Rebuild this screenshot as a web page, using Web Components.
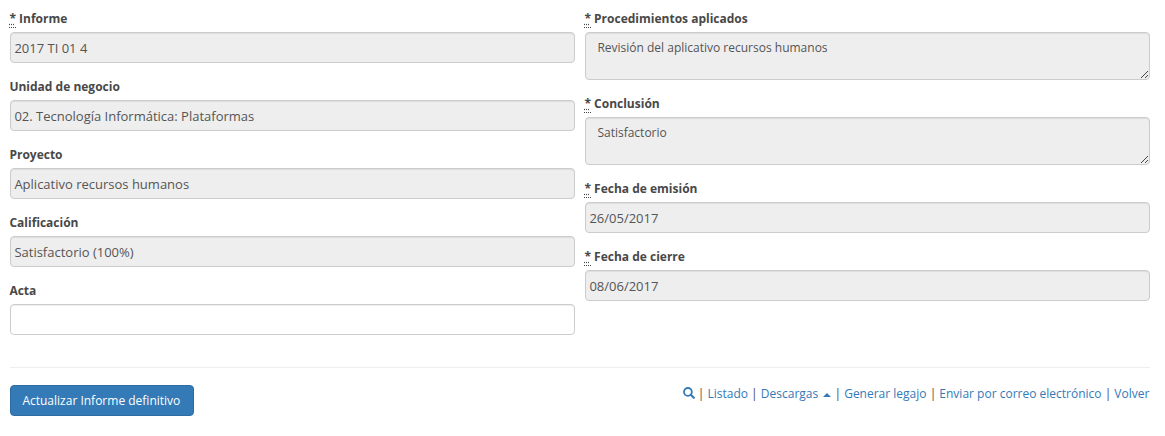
<!DOCTYPE html>
<html lang="es">
<head>
<meta charset="utf-8">
<title>Informe definitivo</title>
<style>
body{margin:0;background:#fff;color:#484848;font:12px/17px "Open Sans","Noto Sans",sans-serif}
</style>
</head>
<body>
<report-form>
  <form-field slot="left" label="Informe" required>2017 TI 01 4</form-field>
  <form-field slot="left" label="Unidad de negocio">02. Tecnología Informática: Plataformas</form-field>
  <form-field slot="left" label="Proyecto">Aplicativo recursos humanos</form-field>
  <form-field slot="left" label="Calificación">Satisfactorio (100%)</form-field>
  <form-field slot="left" label="Acta" editable></form-field>
  <form-field slot="right" label="Procedimientos aplicados" required multiline>Revisión del aplicativo recursos humanos</form-field>
  <form-field slot="right" label="Conclusión" required multiline>Satisfactorio</form-field>
  <form-field slot="right" label="Fecha de emisión" required>26/05/2017</form-field>
  <form-field slot="right" label="Fecha de cierre" required>08/06/2017</form-field>
  <submit-button slot="submit">Actualizar Informe definitivo</submit-button>
  <action-links slot="actions"></action-links>
</report-form>

<template id="form-tpl">
<style>
:host{display:block;padding:10px 15px 0 10px}
.cols{display:grid;grid-template-columns:1fr 1fr;gap:10px}
hr{margin:17px 0;border:0;border-top:1px solid #eee}
.foot{display:flex;justify-content:space-between;align-items:flex-start}
</style>
<div class="cols"><div><slot name="left"></slot></div><div><slot name="right"></slot></div></div>
<hr>
<div class="foot"><slot name="submit"></slot><slot name="actions"></slot></div>
</template>

<template id="field-tpl">
<style>
:host{display:block;margin-bottom:15px}
.label{display:block;height:17px;margin:0 0 5px -.6px;font-weight:700;white-space:pre}
abbr{display:none;border-bottom:1px dotted #444;text-decoration:underline dotted}
:host([required]) abbr{display:inline}
.box{position:relative;box-sizing:border-box;height:31px;padding:6px 3.4px;border:1px solid #ccc;border-radius:4px;background:#eee;color:#555;font-size:13px;line-height:19px;box-shadow:inset 0 1px 1px rgba(0,0,0,.075)}
:host([editable]) .box{background:#fff}
:host([multiline]) .box{height:48px;padding:6px 11.4px;font-size:12px;line-height:17px}
svg{display:none;position:absolute;right:1px;bottom:1px}
:host([multiline]) svg{display:block}
</style>
<span class="label"><abbr title="requerido">*</abbr><span class="name"></span></span>
<div class="box"><slot></slot><svg width="7" height="7" viewBox="0 0 7 7" fill="#444" shape-rendering="crispEdges"><path d="M6 0h1v1h-1zM5 1h1v1h-1zM4 2h1v1h-1zM3 3h1v1h-1zM2 4h1v1h-1zM1 5h1v1h-1zM0 6h1v1h-1zM6 4h1v1h-1zM5 5h1v1h-1zM4 6h1v1h-1z"/></svg></div>
</template>

<template id="button-tpl">
<style>
:host{display:block}
button{display:block;box-sizing:border-box;height:31px;margin:0;padding:6px 12.6px 6px 11.4px;border:1px solid #2e6da4;border-radius:4px;background:#337ab7;color:#fff;font:inherit;line-height:17px;white-space:nowrap}
</style>
<button type="button"><slot></slot></button>
</template>

<template id="links-tpl">
<style>
:host{display:block;margin-right:.6px;white-space:nowrap}
a{color:#337ab7;text-decoration:none}
svg{display:inline-block;width:12px;height:12px;vertical-align:-1px}
.caret{display:inline-block;margin-left:2px;vertical-align:middle;border:4px solid transparent;border-top:0;border-bottom-color:currentColor}
</style>
<a href="#" aria-label="Buscar"><svg viewBox="0 0 12 12" fill="none" stroke="currentColor"><circle cx="4.9" cy="4.9" r="3.9" stroke-width="1.8"/><path d="M7.8 7.8l3 3" stroke-width="2.2" stroke-linecap="round"/></svg></a> | <a href="#">Listado</a> | <a href="#">Descargas <span class="caret"></span></a> | <a href="#">Generar legajo</a> | <a href="#">Enviar por correo electrónico</a> | <a href="#">Volver</a>
</template>

<script>
class TemplateElement extends HTMLElement {
  constructor() {
    super();
    this.attachShadow({mode: 'open'}).append(
      document.getElementById(this.constructor.template).content.cloneNode(true));
  }
}
class ReportForm extends TemplateElement { static template = 'form-tpl'; }
class FormField extends TemplateElement {
  static template = 'field-tpl';
  connectedCallback() {
    this.shadowRoot.querySelector('.name').textContent =
      (this.hasAttribute('required') ? ' ' : '') + this.getAttribute('label');
  }
}
class SubmitButton extends TemplateElement { static template = 'button-tpl'; }
class ActionLinks extends TemplateElement { static template = 'links-tpl'; }
customElements.define('report-form', ReportForm);
customElements.define('form-field', FormField);
customElements.define('submit-button', SubmitButton);
customElements.define('action-links', ActionLinks);
</script>
</body>
</html>
